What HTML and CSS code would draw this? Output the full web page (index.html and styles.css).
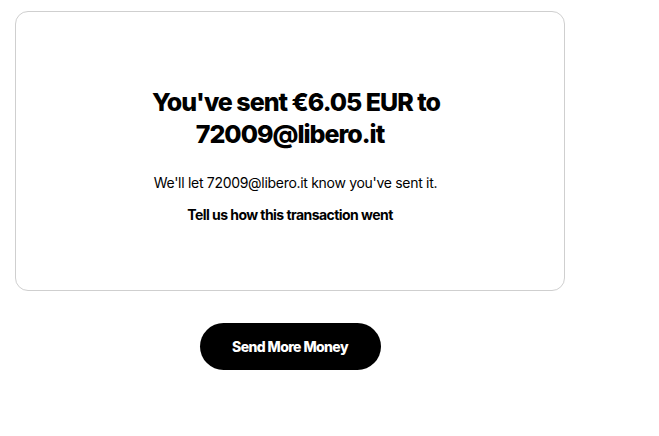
FILE: index.html
```html
<!DOCTYPE html>
<html lang="en">
<head>
<meta charset="utf-8">
<link rel="stylesheet" href="styles.css">
</head>
<body>
<main class="page">
  <section class="card">
    <h1 class="title"><span class="title-line title-line-first">You've sent €6.05 EUR to</span><span class="title-line">72009@libero.it</span></h1>
    <p class="note">We'll let 72009@libero.it know you've sent it.</p>
    <p class="feedback">Tell us how this transaction went</p>
  </section>
  <button class="btn">Send More Money</button>
</main>
</body>
</html>
```
FILE: styles.css
```css
html, body {
  margin: 0;
  padding: 0;
  background: #ffffff;
}
body {
  font-family: Inter, "Noto Sans", sans-serif;
  color: #000;
}
.page {
  width: 550px;
  margin: 11px 0 0 15px;
  display: flex;
  flex-direction: column;
  align-items: center;
}
.card {
  box-sizing: border-box;
  width: 550px;
  height: 280px;
  border: 1px solid #cfcfcf;
  border-radius: 13px;
  display: flex;
  flex-direction: column;
  align-items: center;
  padding-top: 74px;
}
.title {
  margin: 0;
  font-size: 25px;
  line-height: 32px;
  font-weight: 800;
  letter-spacing: -1px;
  text-align: center;
  display: flex;
  flex-direction: column;
  align-items: center;
}
.title-line-first {
  padding-left: 12px;
}
.note {
  margin: 24px 0 0;
  padding-left: 11px;
  font-size: 14px;
  line-height: 18px;
  letter-spacing: -0.3px;
  text-align: center;
}
.feedback {
  margin: 14px 0 0;
  font-size: 14px;
  line-height: 18px;
  font-weight: 700;
  letter-spacing: -0.55px;
  text-align: center;
}
.btn {
  margin-top: 32px;
  width: 181px;
  height: 47px;
  border: 0;
  border-radius: 24px;
  background: #000;
  color: #fff;
  font-family: Inter, "Noto Sans", sans-serif;
  font-size: 14px;
  font-weight: 800;
  letter-spacing: -0.6px;
  cursor: pointer;
}
```
